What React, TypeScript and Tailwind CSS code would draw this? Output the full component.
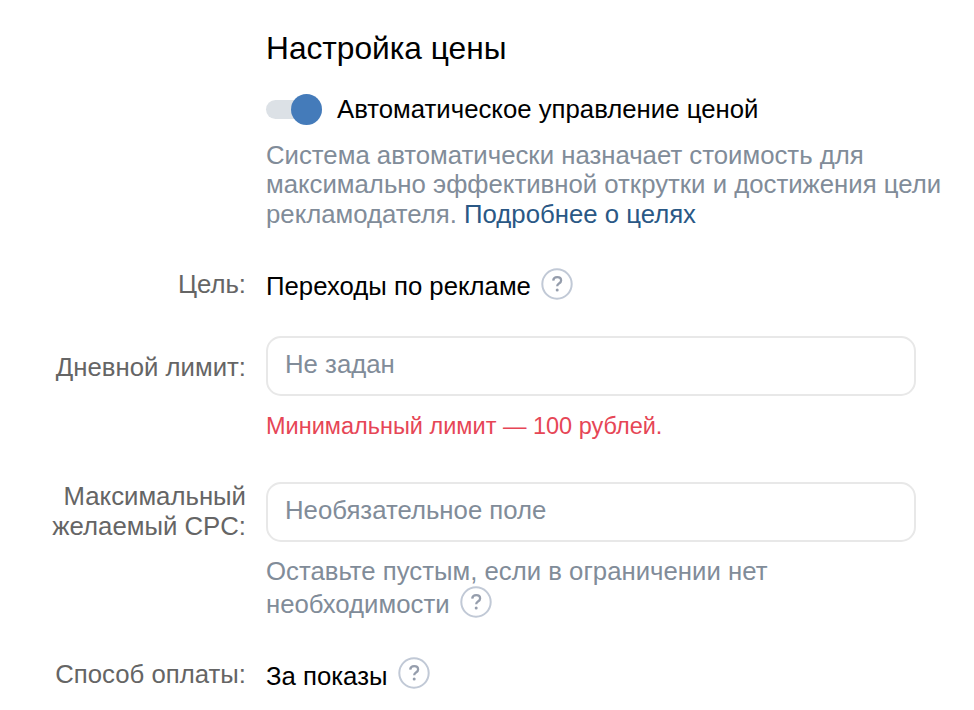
import { useState } from "react";

const HelpIcon = () => (
  <svg className="block h-8 w-8 shrink-0" viewBox="0 0 32 32" fill="none">
    <circle cx="16" cy="16" r="14.7" stroke="#c1c9d6" strokeWidth="2" />
    <path
      d="M12.2 12.6c.2-2.2 1.7-3.5 4-3.5 2.3 0 3.9 1.3 3.9 3.3 0 1.5-.8 2.3-2.1 3.1-1.3.8-1.8 1.500-1.800 2.800"
      stroke="#959dac"
      strokeWidth="2.3"
    />
    <circle cx="16.2" cy="22" r="1.5" fill="#959dac" />
  </svg>
);

const App = () => {
  const [auto, setAuto] = useState(true);
  const [limit, setLimit] = useState("");
  const [cpc, setCpc] = useState("");

  const inputClass =
    "block h-[60px] w-[650px] rounded-[15px] border-2 border-[#e8e8e8] bg-white px-[17px] pb-1 text-[25.75px] text-black outline-none placeholder:text-[#818c99]";

  return (
    <div className="h-[710px] w-[974px] overflow-hidden bg-white font-['Liberation_Sans',Arial,sans-serif] text-[25.75px] leading-[30px] text-black">
      <div className="pl-[266px] pt-[29px]">
        <h1 className="text-[31.7px] leading-[38px] whitespace-nowrap">Настройка цены</h1>
        <div className="mt-[27px] flex h-[31px] items-center">
          <button
            className="flex h-[19px] w-14 items-center justify-end rounded-full bg-[#dce1e6]"
            onClick={() => setAuto(!auto)}
          >
            <span className={auto ? "h-[31px] w-[31px] rounded-full bg-[#447bba]" : "mr-[25px] h-[31px] w-[31px] rounded-full bg-[#aab4be]"} />
          </button>
          <span className="-mt-px ml-[15px] whitespace-nowrap">Автоматическое управление ценой</span>
        </div>
        <div className="mt-[15.5px] whitespace-nowrap leading-[29.7px] text-[#818c99]">
          <div>Система автоматически назначает стоимость для</div>
          <div>максимально эффективной открутки и достижения цели</div>
          <div>
            рекламодателя. <a className="text-[#2a5885]">Подробнее о целях</a>
          </div>
        </div>
      </div>

      <div className="mt-[38.4px] flex h-8">
        <div className="mt-px w-[246px] text-right text-[#656565]">Цель:</div>
        <div className="ml-5 mt-[3px]">Переходы по рекламе</div>
        <div className="ml-[10px]"><HelpIcon /></div>
      </div>

      <div className="mt-9 flex">
        <div className="mt-4 w-[246px] text-right text-[#656565]">Дневной лимит:</div>
        <div className="ml-5">
          <input className={inputClass} placeholder="Не задан" value={limit} onChange={(e) => setLimit(e.target.value)} />
          <div className="mt-[15px] text-[23.5px] text-[#e64656]">Минимальный лимит — 100 рублей.</div>
        </div>
      </div>

      <div className="mt-[41px] flex">
        <div className="-mt-px w-[246px] whitespace-nowrap text-right text-[#656565]">
          <div>Максимальный</div>
          <div>желаемый CPC:</div>
        </div>
        <div className="ml-5">
          <input className={inputClass} placeholder="Необязательное поле" value={cpc} onChange={(e) => setCpc(e.target.value)} />
          <div className="mt-[14px] text-[#818c99]">
            <div>Оставьте пустым, если в ограничении нет</div>
            <div className="flex">
              <span className="mt-[3px]">необходимости</span>
              <span className="ml-[10px]"><HelpIcon /></span>
            </div>
          </div>
        </div>
      </div>

      <div className="mt-[38px] flex">
        <div className="mt-[2px] w-[246px] text-right text-[#656565]">Способ оплаты:</div>
        <div className="ml-5 mt-1">За показы</div>
        <div className="ml-[11px]"><HelpIcon /></div>
      </div>
    </div>
  );
};

export default App;
